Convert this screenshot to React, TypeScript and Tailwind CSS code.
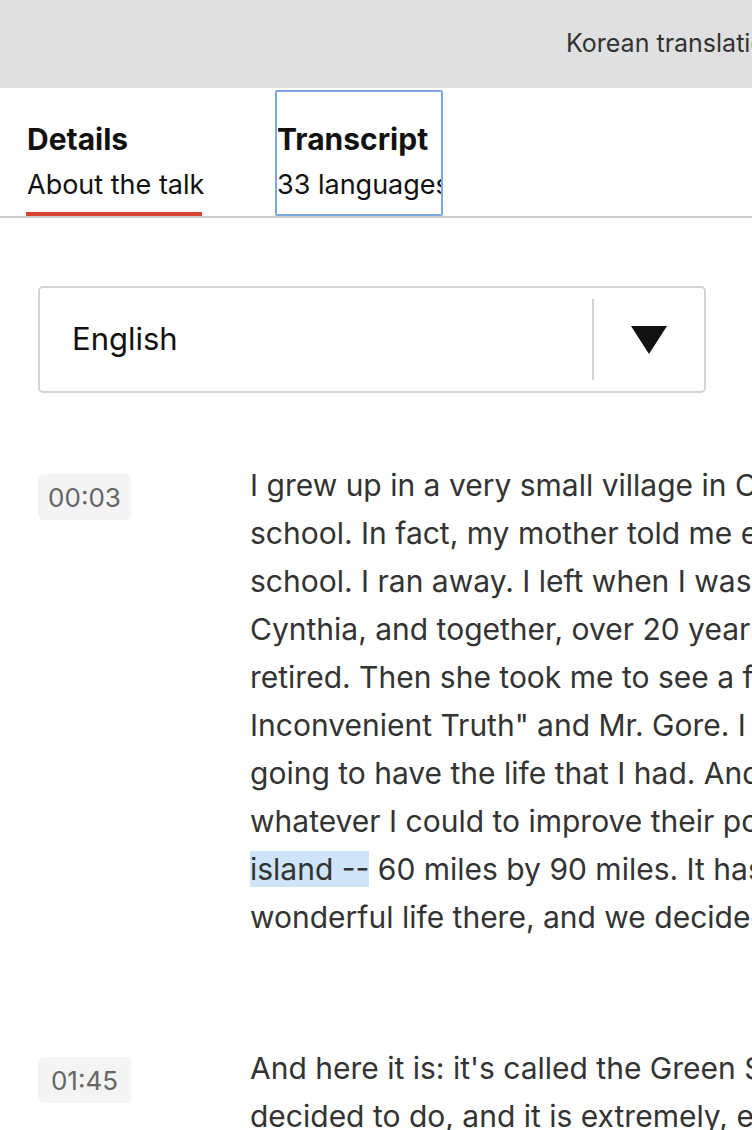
const PARAGRAPHS = [
  {
    time: '00:03',
    lines: [
      'I grew up in a very small village in Canada, and I\'m an',
      'school. In fact, my mother told me eventually that I',
      'school. I ran away. I left when I was 19. I ended up in',
      'Cynthia, and together, over 20 years, we built a',
      'retired. Then she took me to see a film that I really',
      'Inconvenient Truth" and Mr. Gore. I have four kids,',
      'going to have the life that I had. And I decided at',
      'whatever I could to improve their possibilities.',
      null,
      'wonderful life there, and we decided to build a',
    ],
  },
  {
    time: '01:45',
    lines: [
      'And here it is: it\'s called the Green School. What we',
      'decided to do, and it is extremely, extremely simple.',
    ],
  },
];

function Timestamp({ value }: { value: string }) {
  return (
    <div className="mt-[13px] flex h-[46px] w-[93px] shrink-0 items-center justify-center rounded-md bg-[#f4f4f4] text-[26px] text-[#666]">
      {value}
    </div>
  );
}

export default function App() {
  return (
    <div
      className="w-[752px] h-[1130px] overflow-hidden bg-white text-[#333]"
      style={{ fontFamily: 'Inter, "Noto Sans", sans-serif' }}
    >
      {/* top banner */}
      <div className="flex h-[88px] items-center bg-[#e0e0e0] pl-[566px]">
        <span className="whitespace-nowrap text-[25px] text-[#333]">Korean translation</span>
      </div>

      {/* tabs */}
      <div className="flex h-[130px] border-b-2 border-[#d0d0d0]">
        <div className="ml-[26px] flex w-[176px] shrink-0 flex-col">
          <div className="mt-[33px] pl-[1px] text-[30px] font-bold leading-[36px] text-[#111]">Details</div>
          <div className="mt-[13px] whitespace-nowrap pl-[1px] text-[27px] leading-[30px] text-[#111]">About the talk</div>
          <div className="mt-auto h-[4px] bg-[#d9412f]" />
        </div>
        <div className="ml-[73px] mt-[2px] h-[126px] w-[168px] shrink-0 overflow-hidden rounded-[2px] border-2 border-[#7ba9e0]">
          <div className="mt-[29px] whitespace-nowrap text-[30px] font-bold leading-[36px] text-[#111]">Transcript</div>
          <div className="mt-[13px] whitespace-nowrap text-[27px] leading-[30px] text-[#111]">33 languages</div>
        </div>
      </div>

      {/* language select */}
      <div className="ml-[38px] mt-[68px] flex h-[107px] w-[668px] items-center rounded-[5px] border-2 border-[#d4d4d4]">
        <span className="flex-1 pl-[32px] text-[31px] text-[#111]">English</span>
        <div className="h-[81px] w-[2px] bg-[#d4d4d4]" />
        <div className="flex w-[110px] items-center justify-center">
          <svg width="36" height="28" viewBox="0 0 36 28">
            <polygon points="0,0 36,0 18,28" fill="#111" />
          </svg>
        </div>
      </div>

      {/* transcript */}
      <div className="mt-[68px] flex flex-col gap-[103px]">
        {PARAGRAPHS.map((p) => (
          <div key={p.time} className="flex">
            <div className="w-[250px] shrink-0 pl-[38px]">
              <Timestamp value={p.time} />
            </div>
            <div className="text-[30px] leading-[48px] text-[#333]">
              {p.lines.map((line, i) =>
                line === null ? (
                  <div key={i} className="whitespace-nowrap">
                    <span className="bg-[#cfe4f8]">island --</span> 60 miles by 90 miles. It has a
                  </div>
                ) : (
                  <div key={i} className="whitespace-nowrap">
                    {line}
                  </div>
                ),
              )}
            </div>
          </div>
        ))}
      </div>
    </div>
  );
}
